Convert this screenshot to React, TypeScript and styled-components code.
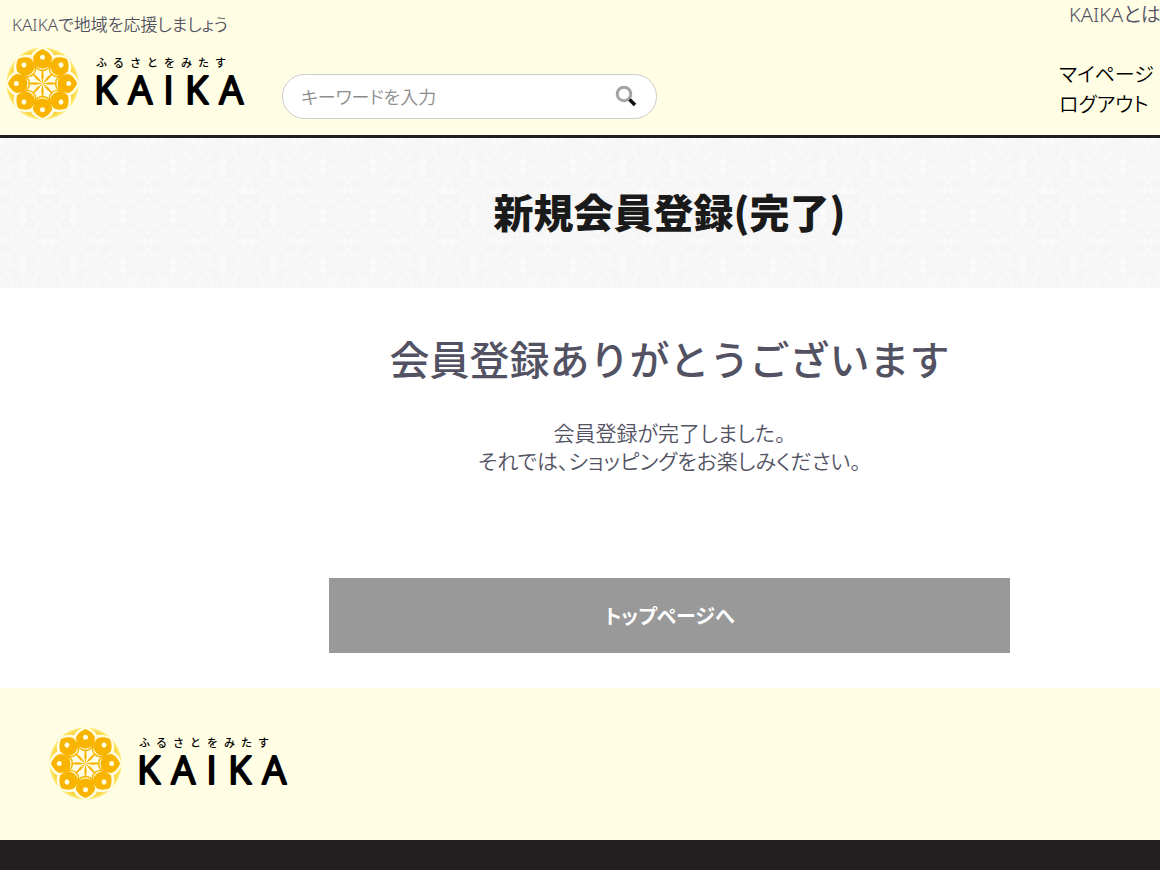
import React from "react";
import styled, { createGlobalStyle } from "styled-components";

const cream = "#fffde3";
const ink = "#231f20";
const angles = [0, 45, 90, 135, 180, 225, 270, 315];
const fineAngles = angles.flatMap((a) => [a + 11, a + 34]);

const GlobalStyle = createGlobalStyle`
  *, *::before, *::after { box-sizing: border-box; }
  body {
    margin: 0;
    background: #fff;
    color: #525263;
    font-family: "Noto Sans", "Noto Sans CJK JP", sans-serif;
    font-feature-settings: "palt";
  }
`;

const Viewport = styled.div`
  overflow-x: clip;
`;

const Page = styled.div`
  display: flex;
  flex-direction: column;
  min-width: 1339px;
  min-height: 100vh;
`;

const Header = styled.header`
  display: flex;
  justify-content: space-between;
  padding-bottom: 15px;
  background: ${cream};
  border-bottom: 3px solid ${ink};
`;

const Brand = styled.div`
  display: flex;
  flex-direction: column;
`;

const Tagline = styled.p`
  margin: 0;
  padding: 12px 12px 6px;
  font-size: 17px;
  line-height: 26px;
  font-weight: 350;
`;

const BrandRow = styled.div`
  display: flex;
  gap: 16px;
  padding-left: 6px;
`;

const LogoLink = styled.a`
  display: block;
  width: 260px;
  height: 76px;
`;

const SearchForm = styled.form`
  display: flex;
  align-items: center;
  width: 375px;
  height: 45px;
  margin-top: 30px;
  padding: 0 19px 0 18px;
  border: 1px solid #ccc;
  border-radius: 23px;
  background: #fff;
`;

const SearchInput = styled.input`
  flex: 1;
  min-width: 0;
  padding: 0;
  border: 0;
  outline: 0;
  background: transparent;
  font: inherit;
  font-size: 18px;
  line-height: 24px;
  font-weight: 350;
  font-feature-settings: inherit;
  color: ${ink};
  &::placeholder { color: #8c8c8c; }
`;

const SearchButton = styled.button`
  display: flex;
  padding: 0;
  border: 0;
  background: none;
  cursor: pointer;
`;

const Account = styled.nav`
  display: flex;
  flex-direction: column;
  width: 280px;
`;

const AboutLink = styled.a`
  padding: 0 10px;
  margin-bottom: 30px;
  font-size: 20px;
  line-height: 30px;
  font-weight: 350;
  color: #525263;
  text-decoration: none;
`;

const AccountLink = styled.a`
  font-size: 20px;
  line-height: 30px;
  font-weight: 350;
  color: #000;
  text-decoration: none;
`;

const TitleBand = styled.div`
  display: grid;
  height: 150px;
  background: #f6f6f6;
  > * { grid-area: 1 / 1; }
`;

const PageTitle = styled.h1`
  align-self: center;
  margin: 0;
  padding-bottom: 4px;
  text-align: center;
  font-family: "Noto Sans CJK JP", sans-serif;
  font-size: 40px;
  line-height: 60px;
  font-weight: 900;
  color: #1a1a1a;
`;

const Main = styled.main`
  display: flex;
  flex-direction: column;
  align-items: center;
  padding: 42px 0 35px;
`;

const Heading = styled.h2`
  margin: 0 0 29px;
  font-size: 40px;
  line-height: 60px;
  font-weight: 500;
  font-feature-settings: normal;
`;

const Message = styled.p`
  margin: 0 0 103px;
  text-align: center;
  font-size: 21px;
  line-height: 28px;
  font-weight: 350;
`;

const TopButton = styled.button`
  width: 681px;
  height: 75px;
  border: 0;
  background: #999;
  color: #fff;
  font: inherit;
  font-size: 20px;
  font-weight: 700;
  font-feature-settings: inherit;
  cursor: pointer;
`;

const Footer = styled.footer`
  padding: 36px 49px 40px;
  background: ${cream};
`;

const FooterBar = styled.div`
  flex: 1;
  min-height: 30px;
  background: ${ink};
`;

const LogoKana = styled.text`
  font-family: "Noto Sans CJK JP", sans-serif;
  font-size: 11px;
  font-weight: 500;
  font-feature-settings: normal;
  letter-spacing: 6px;
`;

const LogoName = styled.text`
  font-family: "Open Sans", sans-serif;
  font-size: 38px;
  font-weight: 400;
  letter-spacing: 11px;
  stroke: #000;
  stroke-width: 2px;
  stroke-linejoin: round;
`;

function Logo({ id }: { id: string }) {
  return (
    <svg width="260" height="76" viewBox="0 0 260 76" role="img" aria-label="ふるさとをみたす KAIKA">
      <defs>
        <radialGradient id={id} gradientUnits="userSpaceOnUse" cx="0" cy="0" r="36">
          <stop offset="0.75" stopColor="#f9b400" />
          <stop offset="1" stopColor="#ffec70" />
        </radialGradient>
      </defs>
      <g transform="translate(36.500 39.500)">
        <circle r="36" fill={`url(#${id})`} />
        {angles.map((a) => (
          <path key={a} transform={`rotate(${a})`} fill={cream} d="M0-36.500C-6-35-11.500-31-13-25C-12-17-6-13 0-13S12-17 13-25C11.500-31 6-35 0-36.500Z" />
        ))}
        <circle r="23" fill={cream} />
        {angles.map((a) => (
          <g key={a} transform={`rotate(${a})`}>
            <path fill="#f9b400" d="M0-34.500C-4-33-8-30-9.500-26C-9.500-22-8-19-6.200-17Q0-13 6.200-17C8-19 9.500-22 9.500-26C8-30 4-33 0-34.500Z" />
            <path fill="none" stroke="#f9b400" strokeWidth="1.400" d="M-9-21Q-6-13 0-13T9-21" />
            <path fill="#f9b400" d="M0 0L-1.200-7L-.7-14H.7L1.200-7Z" />
            <circle cy="-26.200" r="2.500" fill={cream} />
          </g>
        ))}
      </g>
      <LogoKana x="90" y="23">ふるさとをみたす</LogoKana>
      <LogoName x="88" y="60">KAIKA</LogoName>
    </svg>
  );
}

function Lattice() {
  const wreaths = [[48, 28], [-2, 28], [23, 3], [23, 53]];
  const nodes = [[23, 28, 90], [48, 3, 0], [-2, 3, 0], [48, 53, 0], [-2, 53, 0]];
  return (
    <svg width="100%" height="150" aria-hidden="true">
      <defs>
        <pattern id="lattice" width="50" height="50" patternUnits="userSpaceOnUse">
          {wreaths.map(([x, y]) => (
            <g key={`${x}-${y}`} transform={`translate(${x} ${y})`} fill="#fafafa">
              {fineAngles.map((a) => (
                <ellipse key={a} transform={`rotate(${a})`} cy="-12" rx="1.500" ry="2" />
              ))}
              {angles.map((a) => (
                <g key={a} transform={`rotate(${a})`}>
                  <ellipse cy="-8" rx="1" ry="1.500" />
                  <ellipse cy="-16" rx="1.500" ry="2.200" />
                </g>
              ))}
            </g>
          ))}
          {nodes.map(([x, y, turn]) => (
            <g key={`${x}-${y}`} transform={`translate(${x} ${y}) rotate(${turn})`} fill="#fbfbfb">
              <circle cx="-3.500" r="3" />
              <circle cx="3.500" r="3" />
            </g>
          ))}
        </pattern>
      </defs>
      <rect width="100%" height="150" fill="url(#lattice)" />
    </svg>
  );
}

export default function App() {
  return (
    <Viewport>
      <GlobalStyle />
      <Page>
        <Header>
          <Brand>
            <Tagline>KAIKAで地域を応援しましょう</Tagline>
            <BrandRow>
              <LogoLink href="#"><Logo id="bloom-header" /></LogoLink>
              <SearchForm role="search" onSubmit={(e) => e.preventDefault()}>
                <SearchInput type="search" aria-label="キーワード" placeholder="キーワードを入力" />
                <SearchButton type="submit" aria-label="検索">
                  <svg width="22" height="22" viewBox="0 0 22 22" fill="none">
                    <circle cx="9" cy="8" r="6.800" stroke="#a3a3a3" strokeWidth="3" />
                    <path d="M14.500 13.500L20 19" stroke="#111" strokeWidth="3.500" />
                  </svg>
                </SearchButton>
              </SearchForm>
            </BrandRow>
          </Brand>
          <Account>
            <AboutLink href="#">KAIKAとは</AboutLink>
            <AccountLink href="#">マイページ</AccountLink>
            <AccountLink href="#">ログアウト</AccountLink>
          </Account>
        </Header>
        <TitleBand>
          <Lattice />
          <PageTitle>新規会員登録(完了)</PageTitle>
        </TitleBand>
        <Main>
          <Heading>会員登録ありがとうございます</Heading>
          <Message>会員登録が完了しました。<br />それでは、ショッピングをお楽しみください。</Message>
          <TopButton type="button">トップページへ</TopButton>
        </Main>
        <Footer>
          <LogoLink href="#"><Logo id="bloom-footer" /></LogoLink>
        </Footer>
        <FooterBar />
      </Page>
    </Viewport>
  );
}
